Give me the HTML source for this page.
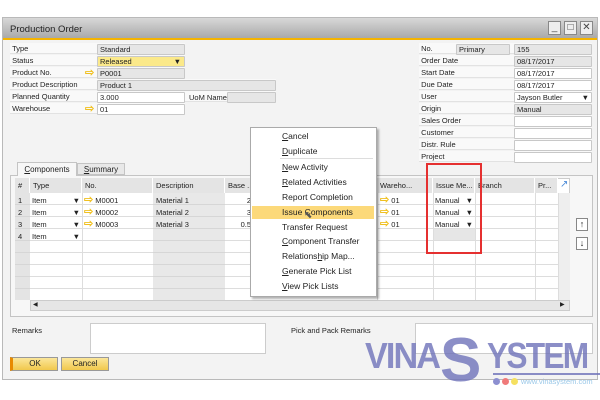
<!DOCTYPE html><html><head><meta charset="utf-8"><style>
*{box-sizing:border-box;margin:0;padding:0}
body{width:600px;height:400px;background:#fff;font-family:"Liberation Sans",sans-serif;font-size:7.5px;color:#222;position:relative;overflow:hidden}
.a{position:absolute}
.win{left:2px;top:17px;width:596px;height:363px;border:1px solid #b9b9b9;background:#f3f3f3}
.title{left:3px;top:18px;width:594px;height:20px;background:linear-gradient(#d8d8d8,#a9a9a9);font-size:9.5px;padding:6px 7px;color:#222}
.orange{left:3px;top:38px;width:594px;height:2px;background:#f5b400}
.lbl{height:11px;line-height:11px;border-bottom:1px solid #e2e2e2;background:#f9f9f9}
.f{height:11px;line-height:10px;border:1px solid #c8c8c8;background:#e6e6e6;padding-left:2px;border-radius:1px}
.w{background:#fff}
.arr{color:#f0c020;font-size:11px;line-height:9px;font-weight:bold}
.wb{width:13px;height:14px;top:21px;border:1px solid #888;background:#eee;font-size:10px;text-align:center;line-height:12px;color:#444}
.hd{background:#e4e4e4;height:15px;line-height:15px;padding-left:3px;border-right:1px solid #fff}
.mi{left:282px;font-size:8.5px;color:#222}
.btn{height:14px;border:1px solid #999;background:linear-gradient(#fbe69a,#f1c84c);text-align:center;line-height:12px;font-size:8px}
.wm{font-size:36px;font-weight:bold;color:rgba(110,114,185,.8);letter-spacing:-2px;line-height:40px;transform-origin:left top}
</style></head><body>
<div class="a win"></div>
<div class="a title">Production Order</div>
<div class="a wb" style="left:548px">_</div><div class="a wb" style="left:564px">□</div><div class="a wb" style="left:580px">✕</div>
<div class="a orange"></div>

<div class="a lbl" style="left:10px;top:43px;width:175px">&nbsp;Type</div>
<div class="a lbl" style="left:10px;top:55px;width:175px">&nbsp;Status</div>
<div class="a lbl" style="left:10px;top:67px;width:175px">&nbsp;Product No.</div>
<div class="a lbl" style="left:10px;top:79px;width:266px">&nbsp;Product Description</div>
<div class="a lbl" style="left:10px;top:91px;width:266px">&nbsp;Planned Quantity</div>
<div class="a lbl" style="left:10px;top:103px;width:175px">&nbsp;Warehouse</div>
<div class="a f" style="left:97px;top:44px;width:88px">Standard</div>
<div class="a f" style="left:97px;top:56px;width:88px;background:#fbe98a">Released<span style="float:right;margin-right:3px">▼</span></div>
<div class="a arr" style="left:85px;top:69px">⇨</div>
<div class="a f" style="left:97px;top:68px;width:88px">P0001</div>
<div class="a f" style="left:97px;top:80px;width:179px">Product 1</div>
<div class="a f w" style="left:97px;top:92px;width:88px">3.000</div>
<div class="a" style="left:189px;top:93px">UoM Name</div>
<div class="a f" style="left:227px;top:92px;width:49px"></div>
<div class="a arr" style="left:85px;top:105px">⇨</div>
<div class="a f w" style="left:97px;top:104px;width:88px">01</div>

<div class="a lbl" style="left:419px;top:43px;width:173px">&nbsp;No.</div>
<div class="a lbl" style="left:419px;top:55px;width:173px">&nbsp;Order Date</div>
<div class="a lbl" style="left:419px;top:67px;width:173px">&nbsp;Start Date</div>
<div class="a lbl" style="left:419px;top:79px;width:173px">&nbsp;Due Date</div>
<div class="a lbl" style="left:419px;top:91px;width:173px">&nbsp;User</div>
<div class="a lbl" style="left:419px;top:103px;width:173px">&nbsp;Origin</div>
<div class="a lbl" style="left:419px;top:115px;width:173px">&nbsp;Sales Order</div>
<div class="a lbl" style="left:419px;top:127px;width:173px">&nbsp;Customer</div>
<div class="a lbl" style="left:419px;top:139px;width:173px">&nbsp;Distr. Rule</div>
<div class="a lbl" style="left:419px;top:151px;width:173px">&nbsp;Project</div>
<div class="a f" style="left:456px;top:44px;width:54px">Primary</div>
<div class="a f" style="left:514px;top:44px;width:78px">155</div>
<div class="a f" style="left:514px;top:56px;width:78px">08/17/2017</div>
<div class="a f w" style="left:514px;top:68px;width:78px">08/17/2017</div>
<div class="a f w" style="left:514px;top:80px;width:78px">08/17/2017</div>
<div class="a f w" style="left:514px;top:92px;width:78px">Jayson Butler<span style="float:right;margin-right:2px">▼</span></div>
<div class="a f" style="left:514px;top:104px;width:78px">Manual</div>
<div class="a f w" style="left:514px;top:116px;width:78px"></div>
<div class="a f w" style="left:514px;top:128px;width:78px"></div>
<div class="a f w" style="left:514px;top:140px;width:78px"></div>
<div class="a f w" style="left:514px;top:152px;width:78px"></div>

<div class="a" style="left:10px;top:175px;width:583px;height:142px;border:1px solid #c4c4c4;background:#f7f7f7"></div>
<div class="a" style="left:17px;top:162px;width:60px;height:14px;border:1px solid #c4c4c4;border-bottom:none;background:#f7f7f7;text-align:center;line-height:13px;font-size:8px"><u>C</u>omponents</div>
<div class="a" style="left:77px;top:163px;width:48px;height:12px;border:1px solid #c4c4c4;background:#e8e8e8;text-align:center;line-height:11px;font-size:8px"><u>S</u>ummary</div>

<div class="a" style="left:15px;top:178px;width:555px;height:122px;background:#fff;border:1px solid #ccc"></div>
<div class="a" style="left:15px;top:178px;width:543px;height:15px;background:#e4e4e4"></div>
<div class="a hd" style="left:15px;top:178px;width:15px">#</div>
<div class="a hd" style="left:30px;top:178px;width:52px">Type</div>
<div class="a hd" style="left:82px;top:178px;width:71px">No.</div>
<div class="a hd" style="left:153px;top:178px;width:72px">Description</div>
<div class="a hd" style="left:225px;top:178px;width:40px">Base ...</div>
<div class="a hd" style="left:377px;top:178px;width:56px">Wareho...</div>
<div class="a hd" style="left:433px;top:178px;width:42px">Issue Me...</div>
<div class="a hd" style="left:475px;top:178px;width:60px">Branch</div>
<div class="a hd" style="left:535px;top:178px;width:23px">Pr...</div>
<div class="a" style="left:560px;top:179px;color:#4a8ad8;font-size:10px">↗</div>
<div class="a" style="left:558px;top:193px;width:12px;height:107px;background:#eee;border-left:1px solid #ddd"></div>
<div class="a" style="left:30px;top:300px;width:540px;height:11px;background:#e6e6e6;border:1px solid #ccc"></div>
<div class="a" style="left:33px;top:301px;font-size:6px">◀</div>
<div class="a" style="left:560px;top:301px;font-size:6px">▶</div>

<div class="a" style="left:15px;top:193px;width:543px;height:107px;background:repeating-linear-gradient(#fff 0 11px,#ddd 11px 12px)"></div>
<div class="a" style="left:15px;top:193px;width:15px;height:107px;background:repeating-linear-gradient(#e4e4e4 0 11px,#d6d6d6 11px 12px)"></div>
<div class="a" style="left:153px;top:193px;width:72px;height:107px;background:repeating-linear-gradient(#e8e8e8 0 11px,#d6d6d6 11px 12px)"></div>
<div class="a" style="left:433px;top:229px;width:42px;height:11px;background:#e6e6e6"></div>
<div class="a" style="left:82px;top:193px;width:1px;height:107px;background:#ddd"></div>
<div class="a" style="left:377px;top:193px;width:1px;height:107px;background:#ddd"></div>
<div class="a" style="left:433px;top:193px;width:1px;height:107px;background:#ddd"></div>
<div class="a" style="left:475px;top:193px;width:1px;height:107px;background:#ddd"></div>
<div class="a" style="left:535px;top:193px;width:1px;height:107px;background:#ddd"></div>
<div class="a" style="left:18px;top:195px;line-height:12px">1<br>2<br>3<br>4</div>
<div class="a" style="left:32px;top:195px;width:48px;line-height:12px">Item<span style="float:right">▼</span><br>Item<span style="float:right">▼</span><br>Item<span style="float:right">▼</span><br>Item<span style="float:right">▼</span></div>
<div class="a" style="left:84px;top:195px;line-height:12px"><span class="arr">⇨</span> M0001<br><span class="arr">⇨</span> M0002<br><span class="arr">⇨</span> M0003</div>
<div class="a" style="left:156px;top:195px;line-height:12px">Material 1<br>Material 2<br>Material 3</div>
<div class="a" style="left:237px;top:195px;line-height:12px;text-align:right;width:14px">2<br>3<br>0.5</div>
<div class="a" style="left:380px;top:195px;line-height:12px"><span class="arr">⇨</span> 01<br><span class="arr">⇨</span> 01<br><span class="arr">⇨</span> 01</div>
<div class="a" style="left:435px;top:195px;width:38px;line-height:12px">Manual<span style="float:right">▼</span><br>Manual<span style="float:right">▼</span><br>Manual<span style="float:right">▼</span></div>
<div class="a" style="left:426px;top:163px;width:56px;height:91px;border:2px solid #e53030"></div>
<div class="a" style="left:576px;top:218px;width:12px;height:13px;border:1px solid #888;background:#fff;text-align:center;font-size:9px;line-height:11px;font-weight:bold">↑</div>
<div class="a" style="left:576px;top:237px;width:12px;height:13px;border:1px solid #888;background:#fff;text-align:center;font-size:9px;line-height:11px;font-weight:bold">↓</div>

<div class="a" style="left:12px;top:326px">Remarks</div>
<div class="a" style="left:90px;top:323px;width:176px;height:31px;border:1px solid #ccc;background:#fff"></div>
<div class="a" style="left:291px;top:326px">Pick and Pack Remarks</div>
<div class="a" style="left:415px;top:323px;width:178px;height:31px;border:1px solid #ccc;background:#fff"></div>
<div class="a btn" style="left:10px;top:357px;width:48px;border-left:3px solid #e88a00">OK</div>
<div class="a btn" style="left:61px;top:357px;width:48px">Cancel</div>

<div class="a" style="left:250px;top:127px;width:127px;height:170px;background:#fff;border:1px solid #aaa;box-shadow:2px 2px 2px rgba(0,0,0,.3)"></div>
<div class="a" style="left:280px;top:158px;width:93px;height:1px;background:#ddd"></div>
<div class="a" style="left:252px;top:206px;width:122px;height:13px;background:#fcd97a"></div>
<div class="a mi" style="top:131px"><u>C</u>ancel</div>
<div class="a mi" style="top:146px"><u>D</u>uplicate</div>
<div class="a mi" style="top:162px"><u>N</u>ew Activity</div>
<div class="a mi" style="top:177px"><u>R</u>elated Activities</div>
<div class="a mi" style="top:192px">Report Completion</div>
<div class="a mi" style="top:207px">Issue Components</div>
<div class="a mi" style="top:222px">Transfer Request</div>
<div class="a mi" style="top:236px"><u>C</u>omponent Transfer</div>
<div class="a mi" style="top:251px">Relations<u>h</u>ip Map...</div>
<div class="a mi" style="top:266px"><u>G</u>enerate Pick List</div>
<div class="a mi" style="top:281px"><u>V</u>iew Pick Lists</div>
<div class="a" style="left:304px;top:210px;font-size:10px;color:#555">⬉</div>

<div class="a wm" style="left:365px;top:336px;transform:scaleX(0.95)">VINA</div>
<div class="a wm" style="left:440px;top:326px;font-size:62px;line-height:70px;letter-spacing:0">S</div>
<div class="a wm" style="left:487px;top:336px;transform:scaleX(0.88)">YSTEM</div>
<div class="a" style="left:493px;top:373px;width:107px;height:2px;background:rgba(110,114,185,.8)"></div>
<div class="a" style="left:493px;top:378px;width:7px;height:7px;border-radius:50%;background:#8c8fd0"></div>
<div class="a" style="left:502px;top:378px;width:7px;height:7px;border-radius:50%;background:#f07a7a"></div>
<div class="a" style="left:511px;top:378px;width:7px;height:7px;border-radius:50%;background:#f5e060"></div>
<div class="a" style="left:521px;top:377px;font-size:7.5px;color:#9ac8e8">www.vinasystem.com</div>
</body></html>
